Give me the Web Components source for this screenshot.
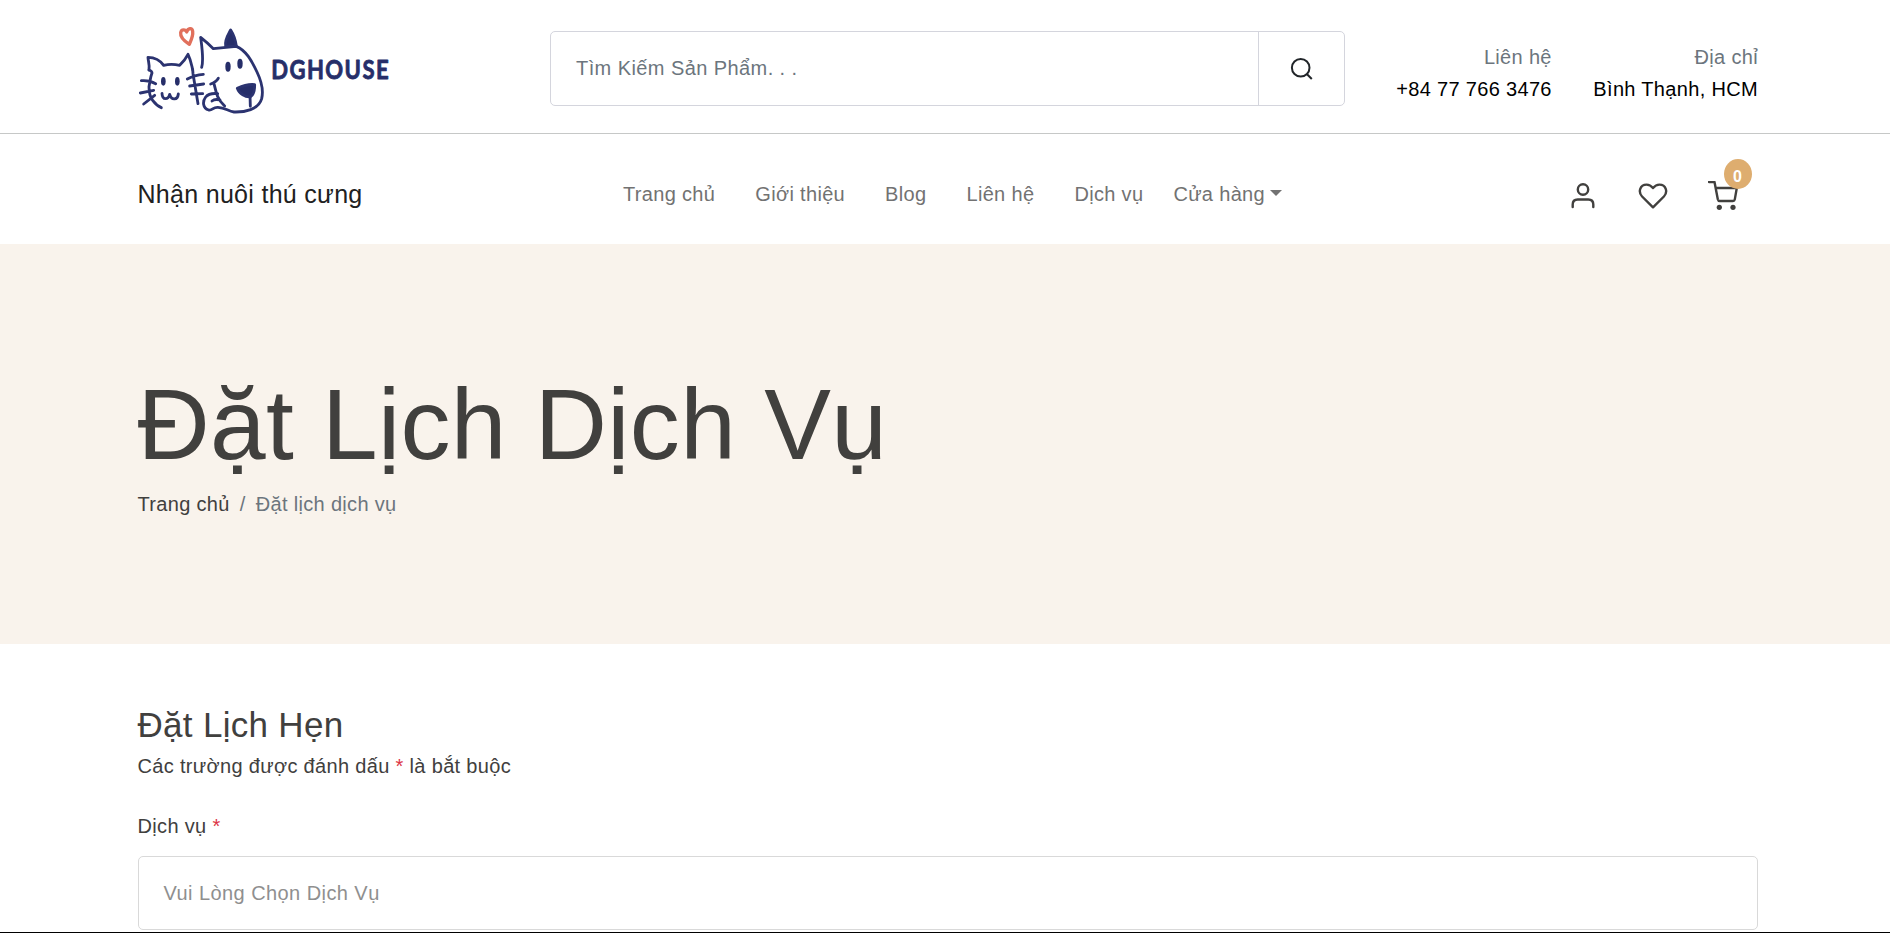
<!DOCTYPE html>
<html lang="vi">
<head>
<meta charset="utf-8">
<title>Đặt Lịch Dịch Vụ</title>
<style>
html,body{margin:0;height:100%;overflow:hidden}
body{background:#fff;font:20px/32px "Liberation Sans",Arial,sans-serif;letter-spacing:.33px;color:#41403e}
</style>
</head>
<body>
<dg-page></dg-page>
<script>
const define = (name, html) => customElements.define(name, class extends HTMLElement {
  constructor() {
    super();
    this.attachShadow({mode: 'open'}).innerHTML = html;
  }
});

define('dg-logo', `
<style>
:host{display:block;width:254px;height:98px}
svg{display:block;overflow:visible}
text{font:700 78px Lato,sans-serif;letter-spacing:5px}
</style>
<svg width="254" height="98" viewBox="24 0 762 294" fill="none" stroke="#2b3370" stroke-width="8.5" stroke-linecap="round" stroke-linejoin="round">
  <path stroke="#e1705c" stroke-width="10" d="M178 88C166 80 150 67 152 53C154 41 167 43 170 51C174 39 186 37 188 49C190 63 183 77 178 88Z"/>
  <path d="M57 165C60 151 54 137 54 127C74 127 89 134 101 151Q124 145 149 151Q164 137 174 118C184 138 185 153 188 164"/>
  <path d="M57 165Q66 168 66 174C61 186 60 200 57 215C57 232 60 246 68 256Q80 272 94 278M34 197Q58 195 77 206M31 234L71 226M41 267L74 241"/>
  <path d="M188 164L189 176L204 266M172 192Q194 180 220 178M179 213L221 207M184 237L218 236"/>
  <path d="M96 235C97 257 115 254 119 238C125 258 143 255 145 237"/>
  <ellipse cx="100" cy="199" rx="7" ry="13" fill="#262e69" stroke="none"/>
  <ellipse cx="142" cy="199" rx="7" ry="13" fill="#262e69" stroke="none"/>
  <path d="M215 157C222 134 215 91 212 67Q231 82 250 101L319 94C348 106 365 137 381 171C393 196 402 222 395 251C386 284 343 292 312 291C293 288 286 278 264 277C248 276 248 287 236 285C218 280 217 259 227 246C235 236 252 235 263 236"/>
  <path fill="#262e69" d="M287 94C283 74 295 59 302 45Q315 65 319 93Z"/>
  <path d="M242 207Q258 202 265 190M251 203C258 223 256 247 284 273M246 258Q254 251 270 255M360 239L361 274"/>
  <path fill="#262e69" d="M322 220C337 213 355 207 374 209C374 225 370 240 362 245C347 248 327 235 322 220Z"/>
  <ellipse cx="294" cy="155" rx="8" ry="15" fill="#262e69" stroke="none"/>
  <ellipse cx="330" cy="146" rx="8" ry="15" fill="#262e69" stroke="none"/>
  <text x="424" y="192" fill="#262e69" stroke="#262e69" stroke-width="2.5" textLength="356" lengthAdjust="spacingAndGlyphs">DGHOUSE</text>
</svg>`);

define('dg-search', `
<style>
:host{display:flex;box-sizing:border-box;width:795px;height:75px;border:1px solid #d4d5dd;border-radius:5px}
.field{flex:1;padding:20px 0 0 25px;color:#6c757d;letter-spacing:.42px}
.go{width:85px;border-left:1px solid #d4d5dd;display:flex;align-items:center;justify-content:center}
</style>
<div class="field">Tìm Kiếm Sản Phẩm. . .</div>
<div class="go"><svg width="28" height="28" viewBox="0 0 28 28" fill="none" stroke="#212529" stroke-width="2"><circle cx="12.7" cy="12.8" r="8.8"/><path d="M18.8 19L23.8 24"/></svg></div>`);

define('dg-contact', `
<style>
:host{display:block;text-align:right;white-space:nowrap;color:#000}
.label{color:#6c757d}
</style>
<div class="label"><slot name="label"></slot></div><div><slot></slot></div>`);

define('dg-topbar', `
<style>
:host{display:flex;box-sizing:border-box;height:134px;padding:15px 132px 0 138px;border-bottom:1px solid #c6c8c7;align-items:flex-start}
dg-search{margin:16px 0 0 158px}
.info{display:flex;gap:41.5px;margin:26px 0 0 auto}
</style>
<dg-logo></dg-logo><dg-search></dg-search>
<div class="info">
<dg-contact><span slot="label">Liên hệ</span>+84 77 766 3476</dg-contact>
<dg-contact><span slot="label">Địa chỉ</span>Bình Thạnh, HCM</dg-contact>
</div>`);

define('dg-cart', `
<style>
:host{display:block;position:relative;width:30px;height:30px}
svg{display:block}
.badge{position:absolute;left:16px;top:-22px;width:28px;height:30px;border-radius:50%;background:#dead6f;color:#fff;font-weight:700;font-size:16px;line-height:36px;text-align:center;text-indent:-1px}
</style>
<svg width="30" height="30" viewBox="0 0 30 30" fill="none" stroke="#41403e" stroke-width="2.4" stroke-linecap="round" stroke-linejoin="round"><path d="M1 1H6.5L9.8 18.2Q10.2 20 11.8 20H25Q26.5 20 26.8 18.4L28.8 7H8"/><g fill="#41403e" stroke="none"><circle cx="11.3" cy="26.3" r="2.6"/><circle cx="25" cy="26.3" r="2.6"/></g></svg>
<span class="badge">0</span>`);

define('dg-nav', `
<style>
:host{display:flex;box-sizing:border-box;height:110px;padding:44px 152px 0 137.5px;align-items:flex-start;white-space:nowrap}
.brand{width:485.5px;margin-top:-1px;font-size:25px;line-height:34px;color:#212121;letter-spacing:.3px}
nav{display:flex;color:#727272}
nav span{margin-right:40px}
nav span:nth-child(5){margin-right:30px}
nav span:last-child{margin:0}
nav i{display:inline-block;border:6px solid transparent;border-top-color:#727272;border-bottom:0;margin-left:5px;vertical-align:5px}
.icons{display:flex;margin:3px 0 0 auto}
.icons svg{display:block}
.user{margin-right:43px}.heart{margin-right:40px}
</style>
<div class="brand">Nhận nuôi thú cưng</div>
<nav><span>Trang chủ</span><span>Giới thiệu</span><span>Blog</span><span>Liên hệ</span><span>Dịch vụ</span><span>Cửa hàng<i></i></span></nav>
<div class="icons">
<svg class="user" width="24" height="30" viewBox="0 0 24 30" fill="none" stroke="#41403e" stroke-width="2.4" stroke-linecap="round"><circle cx="12" cy="8.5" r="5.2"/><path d="M1.7 26V23.5Q1.7 18.5 6.7 18.5H17.3Q22.3 18.5 22.3 23.5V26"/></svg>
<svg class="heart" width="30" height="30" viewBox="0 0 30 30" fill="none" stroke="#41403e" stroke-width="2.4" stroke-linejoin="round"><path d="M15 26.3L4.1 15.5C-.2 10.8 2 3.6 8.6 3.6C11.4 3.6 13.2 4.8 15 7C16.8 4.8 18.6 3.6 21.4 3.6C28 3.6 30.2 10.8 25.9 15.5Z"/></svg>
<dg-cart></dg-cart>
</div>`);

define('dg-hero', `
<style>
:host{display:block;box-sizing:border-box;height:400px;padding:120px 137.5px 0;background:#f9f3ec}
h1{margin:0 0 4px;font-weight:400;font-size:100px;line-height:120px;white-space:nowrap;letter-spacing:.3px}
.crumbs{display:flex;gap:10px;color:#6c757d}
.crumbs b{font-weight:400;color:#41403e}
</style>
<h1>Đặt Lịch Dịch Vụ</h1>
<div class="crumbs"><b>Trang chủ</b><span>/</span><span>Đặt lịch dịch vụ</span></div>`);

define('dg-booking', `
<style>
:host{display:block;padding:60px 132px 0 137.5px}
h2{margin:0 0 4px;font-weight:400;font-size:35px;line-height:42px;letter-spacing:.3px}
em{font-style:normal;color:#dc3545}
label{display:block;margin:28px 0 14px}
.select{box-sizing:border-box;height:74px;border:1px solid #d9d9d9;border-radius:5px;padding:20px 25px;color:#8f8f8f;letter-spacing:.43px}
</style>
<h2>Đặt Lịch Hẹn</h2>
<div>Các trường được đánh dấu <em>*</em> là bắt buộc</div>
<label>Dịch vụ <em>*</em></label>
<div class="select">Vui Lòng Chọn Dịch Vụ</div>`);

define('dg-page', `
<style>
:host{display:flex;flex-direction:column;box-sizing:border-box;height:933px;border-bottom:1px solid #000}
</style>
<dg-topbar></dg-topbar><dg-nav></dg-nav><dg-hero></dg-hero><dg-booking></dg-booking>`);
</script>
</body>
</html>
